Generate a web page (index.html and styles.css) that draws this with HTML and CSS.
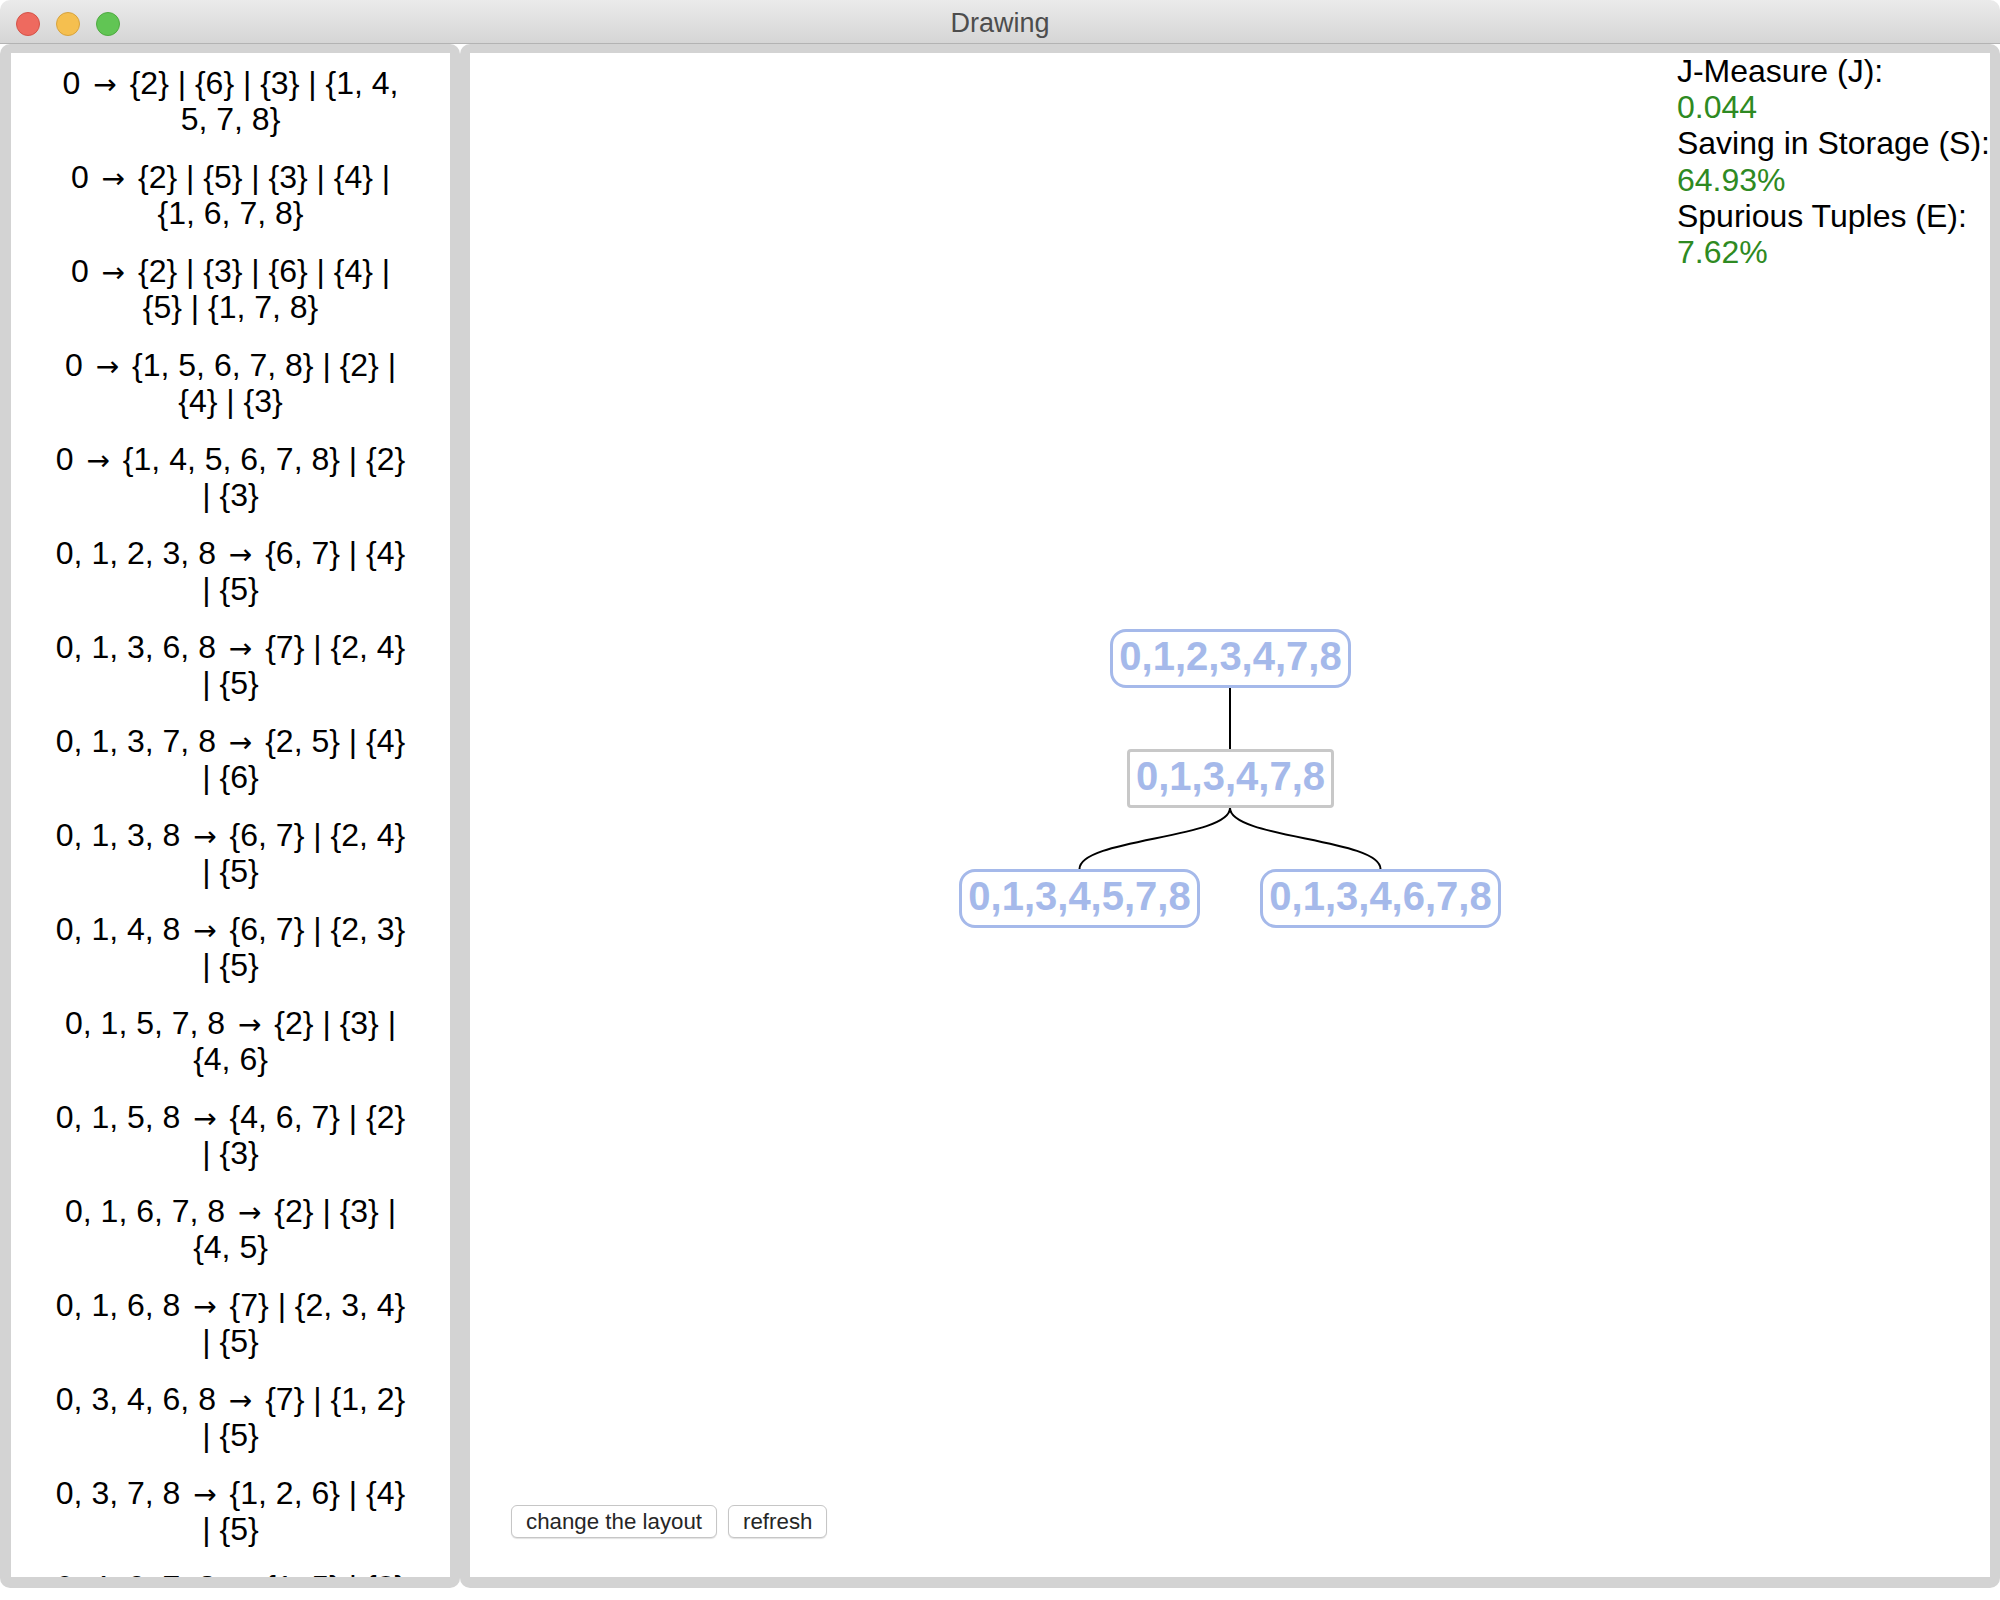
FILE: index.html
```html
<!DOCTYPE html>
<html lang="en">
<head>
<meta charset="utf-8">
<title>Drawing</title>
<link rel="stylesheet" href="styles.css">
</head>
<body>
<div class="window">
  <header class="titlebar">
    <div class="lights">
      <span class="light light-close"></span>
      <span class="light light-min"></span>
      <span class="light light-max"></span>
    </div>
    <div class="title">Drawing</div>
  </header>
  <main class="content">
    <aside class="frame frame-left">
      <div class="list-panel">
        <p class="rule"><span class="seg">0</span> <span class="arrow">→</span> <span class="seg">{2} | {6} | {3} | {1, 4,</span> <span class="seg">5, 7, 8}</span></p>
        <p class="rule"><span class="seg">0</span> <span class="arrow">→</span> <span class="seg">{2} | {5} | {3} | {4} |</span> <span class="seg">{1, 6, 7, 8}</span></p>
        <p class="rule"><span class="seg">0</span> <span class="arrow">→</span> <span class="seg">{2} | {3} | {6} | {4} |</span> <span class="seg">{5} | {1, 7, 8}</span></p>
        <p class="rule"><span class="seg">0</span> <span class="arrow">→</span> <span class="seg">{1, 5, 6, 7, 8} | {2} |</span> <span class="seg">{4} | {3}</span></p>
        <p class="rule"><span class="seg">0</span> <span class="arrow">→</span> <span class="seg">{1, 4, 5, 6, 7, 8} | {2}</span> <span class="seg">| {3}</span></p>
        <p class="rule"><span class="seg">0, 1, 2, 3, 8</span> <span class="arrow">→</span> <span class="seg">{6, 7} | {4}</span> <span class="seg">| {5}</span></p>
        <p class="rule"><span class="seg">0, 1, 3, 6, 8</span> <span class="arrow">→</span> <span class="seg">{7} | {2, 4}</span> <span class="seg">| {5}</span></p>
        <p class="rule"><span class="seg">0, 1, 3, 7, 8</span> <span class="arrow">→</span> <span class="seg">{2, 5} | {4}</span> <span class="seg">| {6}</span></p>
        <p class="rule"><span class="seg">0, 1, 3, 8</span> <span class="arrow">→</span> <span class="seg">{6, 7} | {2, 4}</span> <span class="seg">| {5}</span></p>
        <p class="rule"><span class="seg">0, 1, 4, 8</span> <span class="arrow">→</span> <span class="seg">{6, 7} | {2, 3}</span> <span class="seg">| {5}</span></p>
        <p class="rule"><span class="seg">0, 1, 5, 7, 8</span> <span class="arrow">→</span> <span class="seg">{2} | {3} |</span> <span class="seg">{4, 6}</span></p>
        <p class="rule"><span class="seg">0, 1, 5, 8</span> <span class="arrow">→</span> <span class="seg">{4, 6, 7} | {2}</span> <span class="seg">| {3}</span></p>
        <p class="rule"><span class="seg">0, 1, 6, 7, 8</span> <span class="arrow">→</span> <span class="seg">{2} | {3} |</span> <span class="seg">{4, 5}</span></p>
        <p class="rule"><span class="seg">0, 1, 6, 8</span> <span class="arrow">→</span> <span class="seg">{7} | {2, 3, 4}</span> <span class="seg">| {5}</span></p>
        <p class="rule"><span class="seg">0, 3, 4, 6, 8</span> <span class="arrow">→</span> <span class="seg">{7} | {1, 2}</span> <span class="seg">| {5}</span></p>
        <p class="rule"><span class="seg">0, 3, 7, 8</span> <span class="arrow">→</span> <span class="seg">{1, 2, 6} | {4}</span> <span class="seg">| {5}</span></p>
        <p class="rule"><span class="seg">0, 4, 6, 7, 8</span> <span class="arrow">→</span> <span class="seg">{1, 5} | {2}</span> <span class="seg">| {3}</span></p>
      </div>
    </aside>
    <section class="frame frame-right">
      <div class="canvas-panel">
        <div class="tree">
          <svg class="links" width="1520" height="1524" viewBox="0 0 1520 1524">
            <path d="M760 635 L760 696"/>
            <path d="M760 755 C760 785.5 609.5 785.5 609.5 816"/>
            <path d="M760 755 C760 785.5 910.5 785.5 910.5 816"/>
          </svg>
          <div class="node node-root">0,1,2,3,4,7,8</div>
          <div class="node node-mid">0,1,3,4,7,8</div>
          <div class="node node-left">0,1,3,4,5,7,8</div>
          <div class="node node-right">0,1,3,4,6,7,8</div>
        </div>
        <div class="metrics">
          <div class="metric-label">J-Measure (J):</div>
          <div class="metric-value">0.044</div>
          <div class="metric-label">Saving in Storage (S):</div>
          <div class="metric-value">64.93%</div>
          <div class="metric-label">Spurious Tuples (E):</div>
          <div class="metric-value">7.62%</div>
        </div>
        <div class="actions">
          <button class="btn">change the layout</button>
          <button class="btn">refresh</button>
        </div>
      </div>
    </section>
  </main>
</div>
</body>
</html>
```
FILE: styles.css
```css
* {
  box-sizing: border-box;
}

html,
body {
  margin: 0;
  padding: 0;
  background: #ffffff;
}

body {
  width: 2000px;
  height: 1600px;
  overflow: hidden;
  font-family: "Liberation Sans", Arial, Helvetica, sans-serif;
  color: #000;
}

.window {
  width: 2000px;
  height: 1588px;
  display: flex;
  flex-direction: column;
}

.titlebar {
  flex: none;
  height: 44px;
  position: relative;
  display: flex;
  align-items: center;
  justify-content: center;
  background: linear-gradient(#ebebeb, #d5d5d5);
  border-bottom: 1px solid #b3b3b3;
  border-radius: 10px 10px 0 0;
}

.lights {
  position: absolute;
  left: 16px;
  top: 12px;
  display: flex;
  gap: 16px;
}

.light {
  width: 24px;
  height: 24px;
  border-radius: 50%;
  display: block;
}

.light-close {
  background: #ee6a5f;
  border: 1px solid #d45348;
}

.light-min {
  background: #f5bf4f;
  border: 1px solid #d7a33e;
}

.light-max {
  background: #61c554;
  border: 1px solid #4faa41;
}

.title {
  font-size: 27px;
  color: #4d4d4d;
  padding-top: 3px;
}

.content {
  flex: 1;
  display: flex;
  min-height: 0;
}

.frame {
  background: #d3d3d3;
  border-radius: 10px;
  padding: 9px 10px 11px 10px;
  display: flex;
}

.frame-left {
  width: 460px;
  flex: none;
  padding-left: 11px;
}

.frame-right {
  flex: 1;
}

.list-panel {
  flex: 1;
  background: #ffffff;
  overflow: hidden;
  padding: 13px 40px 0;
}

.rule {
  margin: 0 0 22.4px;
  text-align: center;
  font-size: 32px;
  line-height: 35.8px;
}

.arrow {
  font-family: "DejaVu Sans", sans-serif;
  font-size: 28px;
  line-height: 1;
  margin: 0 4px;
}

.canvas-panel {
  flex: 1;
  background: #ffffff;
  position: relative;
  display: flex;
  flex-direction: column;
  justify-content: flex-end;
  padding: 0 0 39px 41px;
}

.tree {
  position: absolute;
  inset: 0;
}

.links {
  position: absolute;
  left: 0;
  top: 0;
}

.links path {
  fill: none;
  stroke: #000;
  stroke-width: 2;
}

.node {
  position: absolute;
  height: 59px;
  width: 241px;
  border: 3px solid #a5b9ea;
  border-radius: 16px;
  background: #ffffff;
  color: #a5b9ea;
  font-weight: bold;
  font-size: 40px;
  line-height: 49px;
  text-align: center;
  white-space: nowrap;
}

.node-root {
  left: 640px;
  top: 576px;
}

.node-mid {
  left: 657px;
  top: 696px;
  width: 207px;
  border-color: #c8c8c8;
  border-radius: 4px;
}

.node-left {
  left: 489px;
  top: 816px;
}

.node-right {
  left: 790px;
  top: 816px;
}

.metrics {
  position: absolute;
  top: 0;
  right: 0;
  font-size: 32px;
  line-height: 36.2px;
  white-space: nowrap;
}

.metric-value {
  color: #2e8a22;
}

.actions {
  position: relative;
  display: flex;
  gap: 11px;
}

.btn {
  height: 33px;
  padding: 0 14px;
  border: 1px solid #c6c6c6;
  border-radius: 6px;
  background: #ffffff;
  color: #262626;
  font-family: "Liberation Sans", Arial, Helvetica, sans-serif;
  font-size: 22.3px;
  line-height: 31px;
  box-shadow: 0 1px 1px rgba(0, 0, 0, 0.12);
}
```
